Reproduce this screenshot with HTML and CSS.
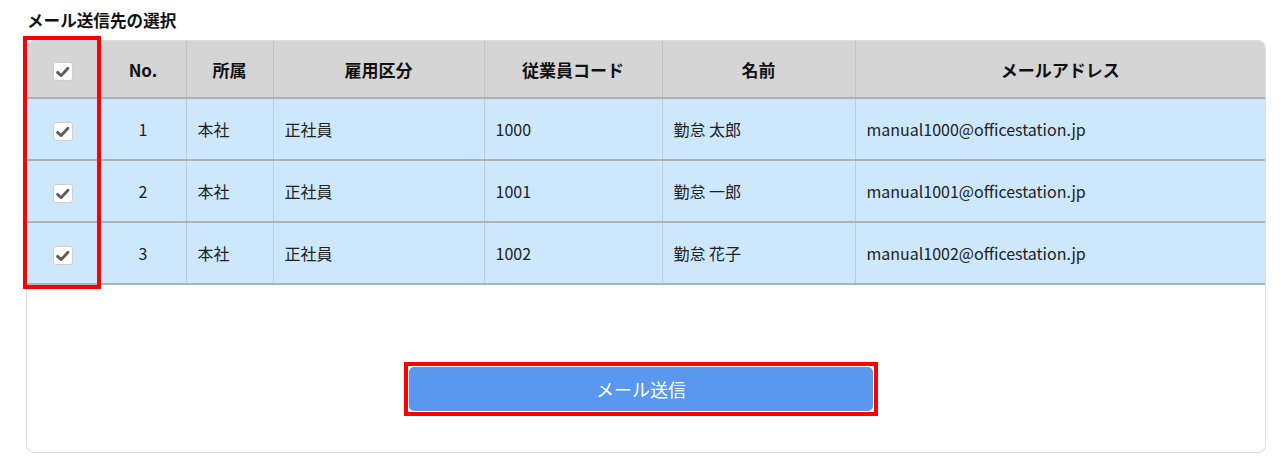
FILE: index.html
```html
<!DOCTYPE html>
<html lang="ja">
<head>
<meta charset="utf-8">
<title>メール送信先の選択</title>
<link rel="stylesheet" href="styles.css">
</head>
<body>
<div class="page">
  <h2 class="title">メール送信先の選択</h2>
  <div class="card-wrap">
    <div class="card">
      <table class="list">
        <colgroup>
          <col class="c-check"><col class="c-no"><col class="c-dept"><col class="c-type"><col class="c-code"><col class="c-name"><col>
        </colgroup>
        <thead>
          <tr>
            <th class="check"><span class="cb"><svg viewBox="0 0 20 20" width="19" height="19"><path d="M4 11 L8 14.5 L15.5 6.5" fill="none" stroke="#5e5e5e" stroke-width="3.2" stroke-linecap="round" stroke-linejoin="round"/></svg></span></th>
            <th>No.</th>
            <th>所属</th>
            <th>雇用区分</th>
            <th>従業員コード</th>
            <th>名前</th>
            <th>メールアドレス</th>
          </tr>
        </thead>
        <tbody>
          <tr>
            <td class="check"><span class="cb"><svg viewBox="0 0 20 20" width="19" height="19"><path d="M4 11 L8 14.5 L15.5 6.5" fill="none" stroke="#5e5e5e" stroke-width="3.2" stroke-linecap="round" stroke-linejoin="round"/></svg></span></td>
            <td class="num">1</td>
            <td>本社</td>
            <td>正社員</td>
            <td>1000</td>
            <td>勤怠 太郎</td>
            <td>manual1000@officestation.jp</td>
          </tr>
          <tr>
            <td class="check"><span class="cb"><svg viewBox="0 0 20 20" width="19" height="19"><path d="M4 11 L8 14.5 L15.5 6.5" fill="none" stroke="#5e5e5e" stroke-width="3.2" stroke-linecap="round" stroke-linejoin="round"/></svg></span></td>
            <td class="num">2</td>
            <td>本社</td>
            <td>正社員</td>
            <td>1001</td>
            <td>勤怠 一郎</td>
            <td>manual1001@officestation.jp</td>
          </tr>
          <tr>
            <td class="check"><span class="cb"><svg viewBox="0 0 20 20" width="19" height="19"><path d="M4 11 L8 14.5 L15.5 6.5" fill="none" stroke="#5e5e5e" stroke-width="3.2" stroke-linecap="round" stroke-linejoin="round"/></svg></span></td>
            <td class="num">3</td>
            <td>本社</td>
            <td>正社員</td>
            <td>1002</td>
            <td>勤怠 花子</td>
            <td>manual1002@officestation.jp</td>
          </tr>
        </tbody>
      </table>
      <div class="actions">
        <span class="send-frame"><button class="send" type="button">メール送信</button></span>
      </div>
    </div>
    <div class="highlight-col"></div>
  </div>
</div>
</body>
</html>
```

FILE: styles.css
```css
* { box-sizing: border-box; }

html, body {
  margin: 0;
  padding: 0;
  background: #ffffff;
}

body {
  font-family: "Noto Sans CJK JP", "Noto Sans", sans-serif;
  color: #222;
}

.page {
  padding: 9px 0 0 26px;
}

.title {
  margin: 0 0 8px 1px;
  font-size: 16.6px;
  line-height: 23px;
  font-weight: bold;
  color: #111;
}

.card-wrap {
  position: relative;
  width: 1240px;
}

.card {
  width: 1240px;
  height: 413px;
  border: 1px solid #dcdcdc;
  border-radius: 8px;
  overflow: hidden;
  background: #fff;
}

.list {
  width: 100%;
  border-collapse: collapse;
  table-layout: fixed;
}

.c-check { width: 73px; }
.c-no { width: 86px; }
.c-dept { width: 87px; }
.c-type { width: 211px; }
.c-code { width: 178px; }
.c-name { width: 193px; }

.list th {
  height: 57px;
  background: #d5d5d5;
  font-size: 17px;
  font-weight: bold;
  color: #111;
  text-align: center;
  border-left: 1px solid #c2c2c2;
  padding: 0;
}

.list th:first-child,
.list td:first-child {
  border-left: none;
}

.list td {
  height: 62px;
  background: #cde8fd;
  font-size: 16px;
  color: #222;
  padding: 0 11px;
  border-left: 1px solid #bccbd6;
  border-top: 2px solid #a9b3ba;
}

.list tbody tr:last-child td {
  border-bottom: 2px solid #a9b3ba;
}

.list td.num {
  text-align: center;
}

.list .check {
  text-align: center;
  padding: 0;
}

.cb {
  display: inline-flex;
  align-items: center;
  justify-content: center;
  width: 20px;
  height: 19px;
  background: #fff;
  border: 1px solid #cfcfcf;
  border-radius: 3px;
  vertical-align: middle;
}

.actions {
  display: flex;
  justify-content: center;
  padding: 77px 10px 0 0;
}

.send-frame {
  display: inline-block;
  border: 4px solid #ff0000;
  padding: 1px;
  background: #fff;
}

.send {
  display: block;
  width: 464px;
  height: 44px;
  border: none;
  border-radius: 5px;
  background: #5a98ef;
  color: #fff;
  font-family: "Noto Sans CJK JP", "Noto Sans", sans-serif;
  font-size: 18px;
  cursor: pointer;
}

.highlight-col {
  position: absolute;
  left: -3px;
  top: -4px;
  width: 78px;
  height: 253px;
  border: 4px solid #ff0000;
  pointer-events: none;
}
```
